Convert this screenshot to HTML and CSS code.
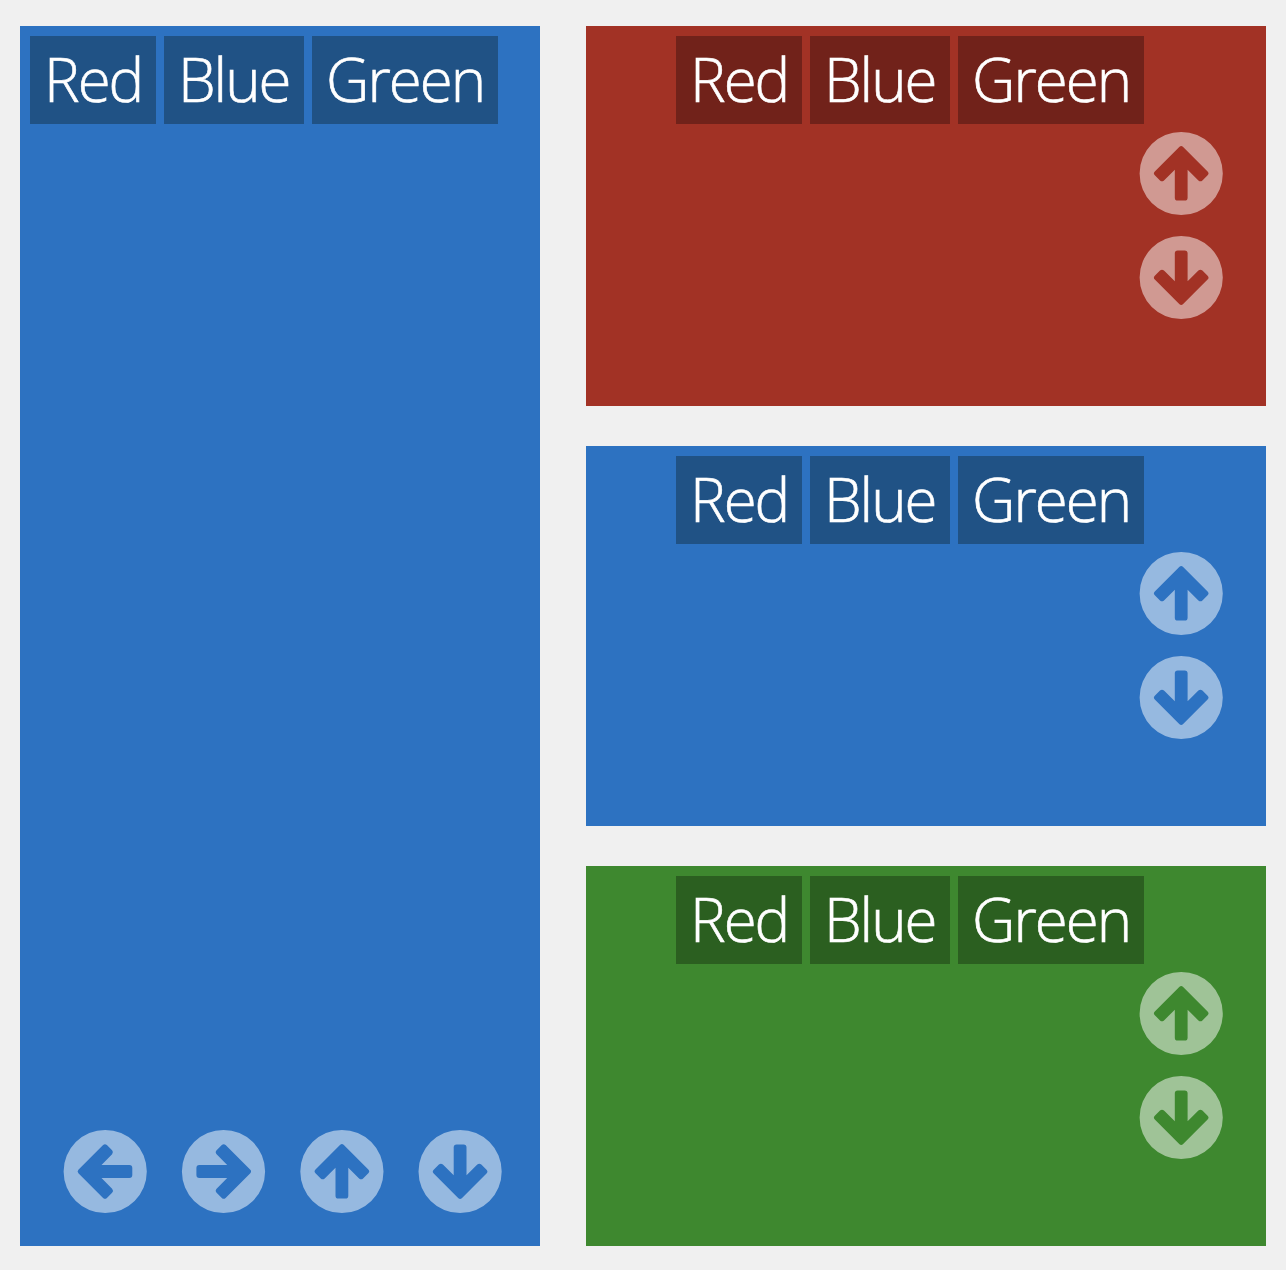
FILE: index.html
```html
<!DOCTYPE html>
<html lang="en">
<head>
<meta charset="utf-8">
<title>Color panels</title>
<link rel="stylesheet" href="styles.css">
</head>
<body>
<svg class="defs" width="0" height="0">
  <defs>
    <path id="arrow" fill-rule="evenodd" d="M-41.6 0A41.6 41.6 0 1 1 41.6 0A41.6 41.6 0 1 1 -41.6 0Z M-1.7 -26.8L-26.4 -2.1Q-28.3 -.2 -26.4 1.7L-21.2 6.9Q-19.2 8.7 -17.2 6.9L-6.4 -3.7V24.2Q-6.4 27.1 -3.5 27.1H3.5Q6.4 27.1 6.4 24.2V-3.7L17.2 6.9Q19.2 8.7 21.2 6.9L26.4 1.7Q28.3 -.2 26.4 -2.1L1.7 -26.8Q0 -28.4 -1.7 -26.8Z"/>
  </defs>
</svg>
<main class="layout">
  <section class="panel blue tall">
    <nav class="tabs"><a class="tab red-tab">Red</a><a class="tab blue-tab">Blue</a><a class="tab green-tab">Green</a></nav>
    <div class="arrows row">
      <svg class="icon"><use href="#arrow" transform="translate(42.2 41.5) rotate(-90)"/></svg>
      <svg class="icon"><use href="#arrow" transform="translate(42.5 41.5) rotate(90)"/></svg>
      <svg class="icon"><use href="#arrow" transform="translate(41.9 41.5)"/></svg>
      <svg class="icon"><use href="#arrow" transform="translate(42.1 41.5) rotate(180)"/></svg>
    </div>
  </section>
  <div class="stack">
    <section class="panel red">
      <nav class="tabs"><a class="tab red-tab">Red</a><a class="tab blue-tab">Blue</a><a class="tab green-tab">Green</a></nav>
      <div class="arrows column">
        <svg class="icon"><use href="#arrow" transform="translate(42.2 41.5)"/></svg>
        <svg class="icon"><use href="#arrow" transform="translate(42.2 41.5) rotate(180)"/></svg>
      </div>
    </section>
    <section class="panel blue">
      <nav class="tabs"><a class="tab red-tab">Red</a><a class="tab blue-tab">Blue</a><a class="tab green-tab">Green</a></nav>
      <div class="arrows column">
        <svg class="icon"><use href="#arrow" transform="translate(42.2 41.5)"/></svg>
        <svg class="icon"><use href="#arrow" transform="translate(42.2 41.5) rotate(180)"/></svg>
      </div>
    </section>
    <section class="panel green">
      <nav class="tabs"><a class="tab red-tab">Red</a><a class="tab blue-tab">Blue</a><a class="tab green-tab">Green</a></nav>
      <div class="arrows column">
        <svg class="icon"><use href="#arrow" transform="translate(42.2 41.5)"/></svg>
        <svg class="icon"><use href="#arrow" transform="translate(42.2 41.5) rotate(180)"/></svg>
      </div>
    </section>
  </div>
</main>
</body>
</html>
```
FILE: styles.css
```css
* { box-sizing: border-box; }
body { margin: 0; background: #f0f0f0; font-family: "Open Sans", sans-serif; font-weight: 300; }
.defs { display: none; }
.layout { display: flex; gap: 46px; height: 1270px; padding: 26px 20px 24px; }
.stack { flex: 1; display: flex; flex-direction: column; gap: 40px; }
.panel { display: flex; flex-direction: column; height: 380px; padding-top: 10px; }
.tall { width: 520px; height: 1220px; padding-left: 10px; justify-content: space-between; }
.blue { background: #2d72c1; --tab: #205285; }
.red { background: #a23225; --tab: #71221a; }
.green { background: #3e882f; --tab: #2b5f20; }
.tabs { display: flex; gap: 8px; }
.stack .tabs { padding-left: 90px; }
.tab { height: 88px; padding-left: 14px; background: var(--tab); color: #fff; font-size: 60px; line-height: 86px; letter-spacing: -2px; white-space: nowrap; -webkit-text-stroke: .6px #fff; }
.red-tab { width: 126px; }
.blue-tab { width: 140px; }
.green-tab { width: 186px; }
.arrows { display: flex; }
.row { justify-content: space-between; width: 439px; margin: 0 0 32px 33px; }
.column { flex-direction: column; align-items: flex-end; gap: 20px; padding: 8px 43px 0 0; }
.icon { width: 84px; height: 84px; fill: #fff; opacity: .5; overflow: visible; }
```
